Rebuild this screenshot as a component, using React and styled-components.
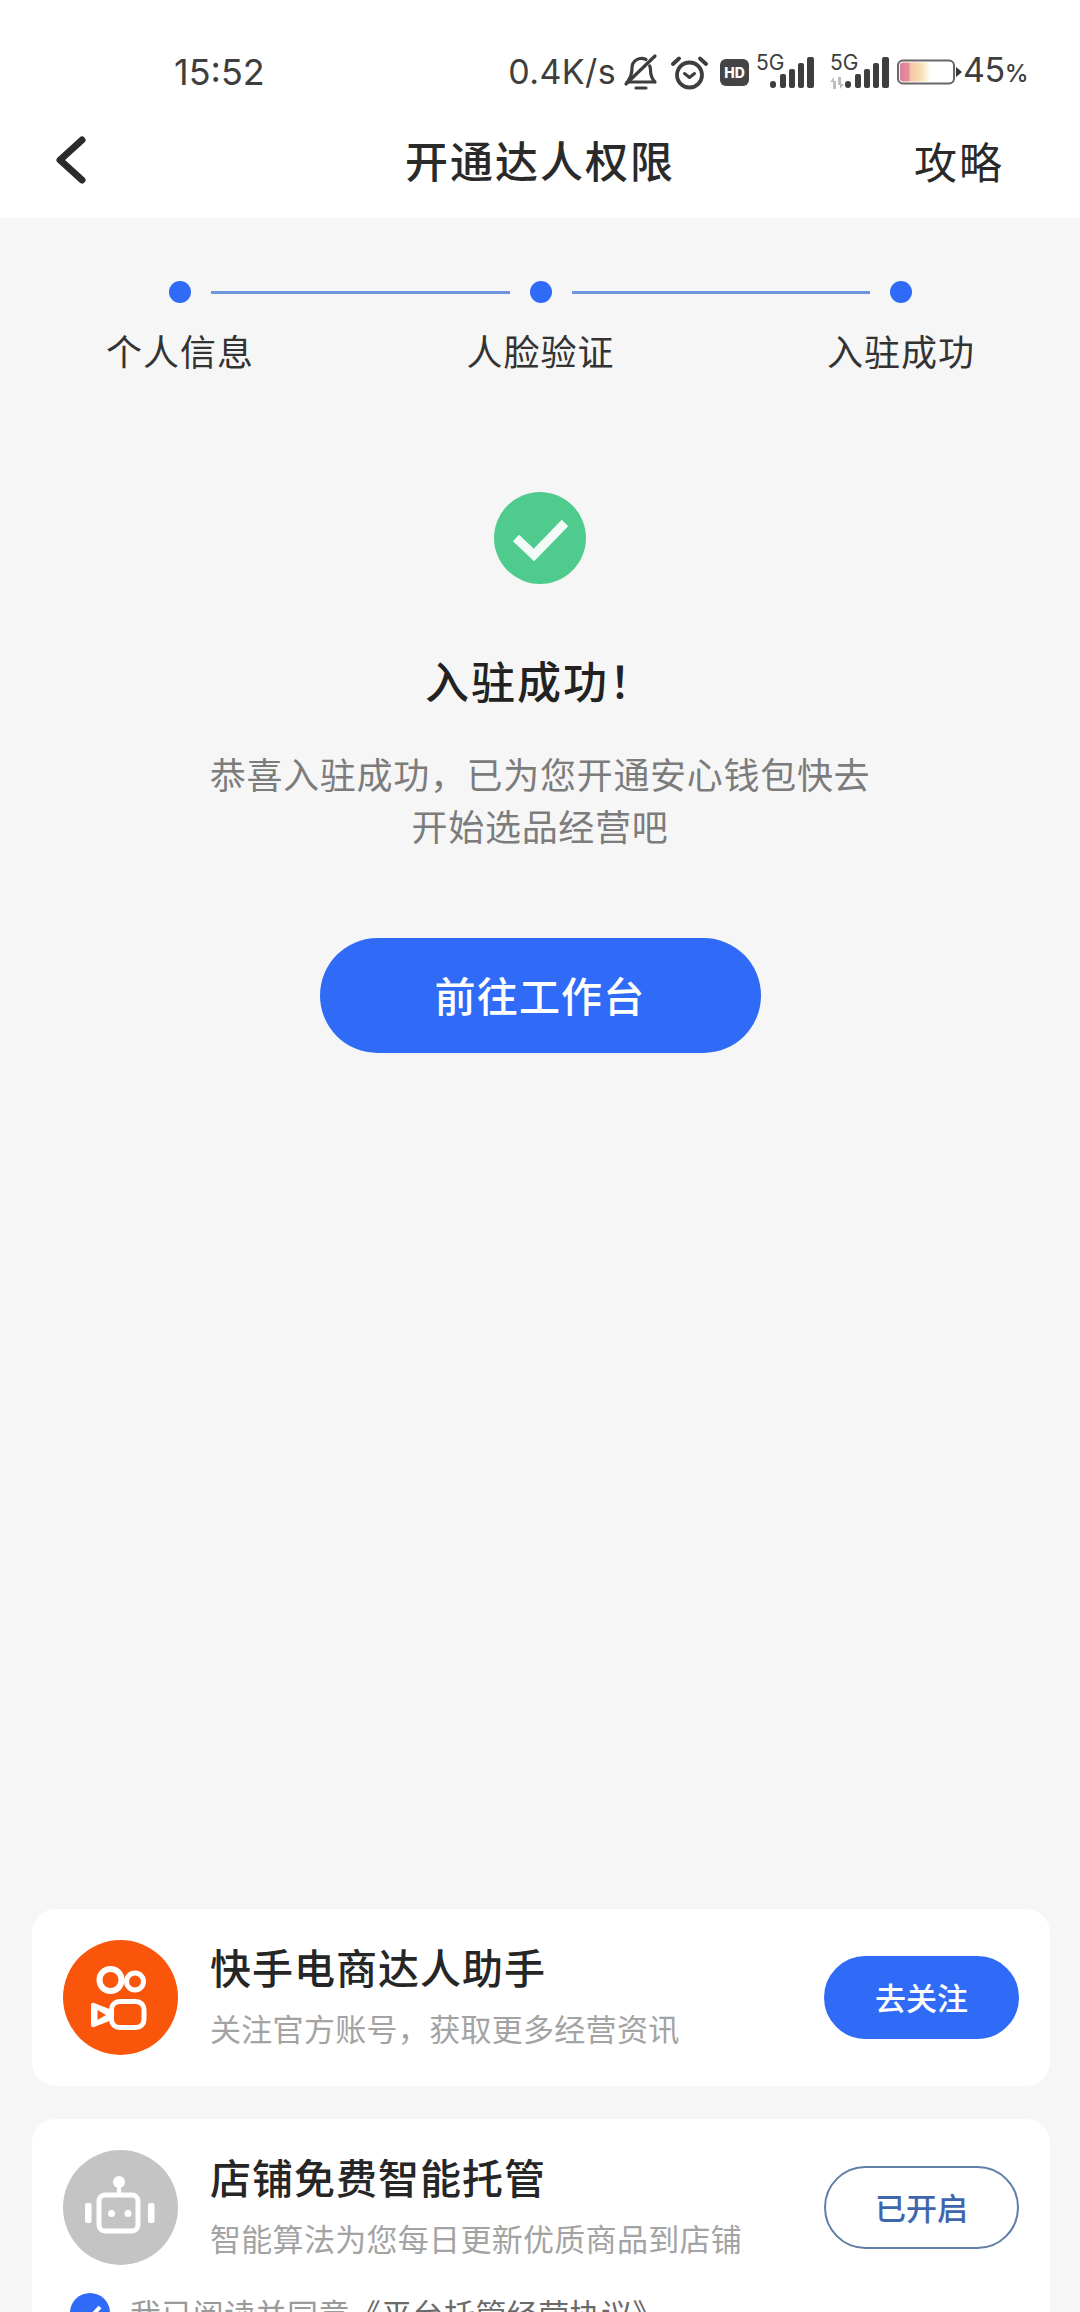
import React from 'react'
import styled, { createGlobalStyle } from 'styled-components'

const blue = '#2f6bf6'
const cjk = '"Noto Sans CJK SC", "Noto Sans", sans-serif'

// full-width punctuation, kept as escapes so an editor can't swap it for ascii
const COMMA = '\uFF0C'
const BANG = '\uFF01'

const GlobalStyle = createGlobalStyle`
  html, body {
    margin: 0;
    padding: 0;
    background: #f6f6f6;
  }
  * {
    box-sizing: border-box;
  }
`

const Page = styled.div`
  width: 1080px;
  height: 2312px;
  overflow: hidden;
  background: #f6f6f6;
  font-family: ${cjk};
  color: #222;
`

const Top = styled.header`
  background: #fff;
  height: 218px;
`

const StatusBar = styled.div`
  height: 110px;
  padding: 52px 52px 0 174px;
  display: flex;
  justify-content: space-between;
  align-items: flex-start;
  color: #3e3e3e;
  font-family: Inter, Roboto, sans-serif;
`

const Time = styled.span`
  font-size: 36px;
  line-height: 40px;
  width: 92px;
`

const StatusIcons = styled.div`
  display: flex;
  align-items: center;
  height: 40px;
`

const Speed = styled.span`
  font-size: 34px;
  line-height: 40px;
  letter-spacing: 0.4px;
  margin-right: 8px;
`

const IconSlot = styled.svg`
  display: block;
  flex: none;
  margin-left: ${(p) => p.$left || 0}px;
`

const HdBadge = styled.span`
  flex: none;
  width: 29px;
  height: 27px;
  margin-left: 12px;
  border-radius: 6px;
  background: #444;
  color: #fff;
  font-size: 14px;
  font-weight: 800;
  line-height: 27px;
  text-align: center;
`

const Signal = styled.div`
  position: relative;
  flex: none;
  width: ${(p) => p.$w}px;
  height: 40px;
  margin-left: ${(p) => p.$left}px;
`

const SignalLabel = styled.span`
  position: absolute;
  left: 0;
  top: -1px;
  font-size: 21px;
  line-height: 24px;
`

const SignalArrows = styled.svg`
  position: absolute;
  left: 0;
  bottom: 3px;
`

const SignalBars = styled.svg`
  position: absolute;
  right: 0;
  top: 5px;
`

const Percent = styled.span`
  font-size: 34px;
  line-height: 40px;
  letter-spacing: -0.5px;
`

const PercentSign = styled.small`
  font-size: 24px;
  font-weight: 500;
`

const NavBar = styled.nav`
  height: 108px;
  padding: 0 55px 8px;
  display: grid;
  grid-template-columns: 1fr auto 1fr;
  align-items: center;
`

const NavTitle = styled.h1`
  margin: 0 0 2px;
  font-size: 43px;
  font-weight: 500;
  letter-spacing: 2px;
  line-height: 60px;
  color: #2a2a2a;
`

const NavLink = styled.span`
  justify-self: end;
  margin-right: 21px;
  font-size: 43px;
  line-height: 60px;
  letter-spacing: 2px;
  color: #2a2a2a;
`

const Main = styled.main`
  display: flex;
  flex-direction: column;
  align-items: center;
  padding-top: 63px;
`

const Track = styled.div`
  width: 100%;
  padding: 0 168px 0 169px;
  display: flex;
  align-items: center;
`

const Dot = styled.span`
  flex: none;
  width: 22px;
  height: 22px;
  border-radius: 50%;
  background: ${blue};
`

const TrackLine = styled.span`
  flex: 1;
  height: 3px;
  margin: 0 20px;
  background: #6f95de;
`

const Labels = styled.div`
  width: 100%;
  margin-top: 21px;
  padding: 0 105px 0 106px;
  display: flex;
  justify-content: space-between;
`

const Label = styled.span`
  width: 148px;
  text-align: center;
  font-size: 36px;
  line-height: 52px;
  letter-spacing: 1px;
  color: #333;
  white-space: nowrap;
`

const SuccessIcon = styled.svg`
  display: block;
  margin-top: 116px;
`

const Heading = styled.h2`
  margin: 66px 0 0;
  font-size: 44px;
  font-weight: 500;
  line-height: 60px;
  letter-spacing: 2px;
  color: #222;
`

const Description = styled.p`
  margin: 37px 0 0;
  width: 700px;
  text-align: center;
  font-size: 36px;
  line-height: 52px;
  letter-spacing: 0.7px;
  color: #7c7c7c;
`

const PrimaryButton = styled.button`
  display: block;
  margin-top: 87px;
  width: 441px;
  height: 115px;
  padding: 0 0 4px;
  border: none;
  border-radius: 58px;
  background: ${blue};
  color: #fff;
  font-family: inherit;
  font-size: 41px;
  font-weight: 500;
  letter-spacing: 1.2px;
`

const Cards = styled.section`
  margin: 856px 30px 0 32px;
  display: flex;
  flex-direction: column;
  gap: 33px;
`

const Card = styled.article`
  background: #fff;
  border-radius: 24px;
  padding: 31px;
`

const CardRow = styled.div`
  display: flex;
  align-items: center;
`

const Avatar = styled.div`
  flex: none;
  width: 115px;
  height: 115px;
  border-radius: 50%;
  background: ${(p) => p.$color};
`

const AvatarArt = styled.svg`
  display: block;
  width: 115px;
  height: 115px;
`

const CardText = styled.div`
  flex: 1;
  min-width: 0;
  margin-left: 32px;
  padding-bottom: 7px;
`

const CardTitle = styled.div`
  font-size: 41px;
  font-weight: 500;
  line-height: 52px;
  letter-spacing: 1px;
  color: #262626;
`

const CardSub = styled.div`
  margin-top: 16px;
  font-size: 31px;
  line-height: 40px;
  letter-spacing: 0.3px;
  color: #a3a3a3;
  white-space: nowrap;
`

const CardButton = styled.button`
  flex: none;
  width: 195px;
  height: 83px;
  border-radius: 42px;
  border: 2px solid ${(p) => (p.$outline ? '#5f7fa8' : blue)};
  background: ${(p) => (p.$outline ? '#fff' : blue)};
  color: ${(p) => (p.$outline ? '#3f66ad' : '#fff')};
  font-family: inherit;
  font-size: 31px;
  font-weight: 500;
  padding: 0 0 2px;
`

const Agreement = styled.div`
  margin-top: 28px;
  padding-left: 7px;
  display: flex;
  align-items: flex-start;
  gap: 20px;
  font-size: 31px;
  line-height: 40px;
  letter-spacing: 0.4px;
  color: #9a9a9a;
  white-space: nowrap;
`

const AgreementLink = styled.span`
  color: #6a6a6a;
`

const CheckDot = styled.svg`
  display: block;
  flex: none;
`

const Bell = () => (
  <IconSlot width="34" height="36" viewBox="0 0 34 36" fill="none" stroke="#3e3e3e" strokeWidth="3.200" strokeLinecap="round" strokeLinejoin="round">
    <path d="M3 28h28M31 28c-3-3-4.500-6-4.500-12 0-1.500-.3-3-.8-4M22 5.500A9.500 9.500 0 0 0 8 14c0 5-1 9-4 13" />
    <path d="M2 30 31 2" />
    <path d="M12 34h10" />
  </IconSlot>
)

const Alarm = () => (
  <IconSlot $left={13} width="37" height="35" viewBox="0 0 37 35" fill="none" stroke="#3e3e3e" strokeWidth="3.800" strokeLinecap="round" strokeLinejoin="round">
    <circle cx="18.500" cy="20" r="12.500" />
    <path d="M13.500 18.500l5 4 5-4" strokeWidth="3" />
    <path d="M2 9 8 3.500M35 9l-6-5.500" />
  </IconSlot>
)

const Bars = () => (
  <SignalBars width="44" height="31" viewBox="0 0 44 31" fill="#3e3e3e">
    <rect x="0" y="24" width="6" height="7" rx="3" />
    <rect x="10" y="17" width="6" height="14" rx="2" />
    <rect x="19" y="12" width="6" height="19" rx="2" />
    <rect x="28" y="6" width="6" height="25" rx="2" />
    <rect x="37" y="0" width="7" height="31" rx="2" />
  </SignalBars>
)

const Arrows = () => (
  <SignalArrows width="14" height="12" viewBox="0 0 14 12" fill="#bdbdbd">
    <path d="M4 0v4h2v8H3V5H0zM10 12V8H8V0h3v7h3z" />
  </SignalArrows>
)

const Battery = () => (
  <IconSlot $left={8} width="66" height="26" viewBox="0 0 66 26">
    <defs>
      <linearGradient id="batteryFill" x1="0" x2="1" y1="0" y2="0">
        <stop offset="0" stopColor="#dc7f98" />
        <stop offset="0.3" stopColor="#e98f9e" />
        <stop offset="0.32" stopColor="#f7c4ae" />
        <stop offset="0.62" stopColor="#f9d9a8" />
        <stop offset="1" stopColor="#fff" />
      </linearGradient>
    </defs>
    <rect x="3" y="3.500" width="31" height="19" rx="3" fill="url(#batteryFill)" />
    <rect x="1" y="1.500" width="56" height="23" rx="5" fill="none" stroke="#666" strokeWidth="2" />
    <path d="M59 8l6 5-6 5z" fill="#333" />
  </IconSlot>
)

const StatusIconsRow = () => (
  <StatusIcons>
    <Speed>0.4K/s</Speed>
    <Bell />
    <Alarm />
    <HdBadge>HD</HdBadge>
    <Signal $w={58} $left={7}>
      <SignalLabel>5G</SignalLabel>
      <Bars />
    </Signal>
    <Signal $w={59} $left={16}>
      <SignalLabel>5G</SignalLabel>
      <Arrows />
      <Bars />
    </Signal>
    <Battery />
    <Percent>
      45<PercentSign>%</PercentSign>
    </Percent>
  </StatusIcons>
)

const BackArrow = () => (
  <svg width="32" height="48" viewBox="0 0 32 48" fill="none" stroke="#2b2b2b" strokeWidth="7" strokeLinecap="round" strokeLinejoin="round">
    <path d="M27 4 5 24l22 20" />
  </svg>
)

const KuaishouLogo = () => (
  <AvatarArt viewBox="0 0 115 115" fill="none" stroke="#fff" strokeLinejoin="round">
    <circle cx="47.500" cy="40" r="11" strokeWidth="6" />
    <circle cx="72" cy="41.500" r="8.500" strokeWidth="5" />
    <rect x="48.500" y="61.500" width="32.500" height="26" rx="8" strokeWidth="5" />
    <path
      d="M31 63 Q28 62 28 65V84Q28 88 31 87L49 80V70Z M34.500 70v10l8.500-5z"
      fill="#fff"
      fillRule="evenodd"
      stroke="none"
    />
  </AvatarArt>
)

const RobotLogo = () => (
  <AvatarArt viewBox="0 0 115 115" fill="#fff">
    <circle cx="56" cy="32" r="6" />
    <rect x="54" y="36" width="4" height="9" />
    <rect x="36" y="45" width="39" height="36" rx="6" fill="#c4c4c4" stroke="#fff" strokeWidth="5" />
    <circle cx="48.500" cy="63.500" r="3.500" />
    <circle cx="65" cy="63.500" r="3.500" />
    <rect x="22" y="53" width="6.500" height="20" rx="2" />
    <rect x="85" y="53" width="6.500" height="20" rx="2" />
  </AvatarArt>
)

export default function App() {
  return (
    <Page>
      <GlobalStyle />
      <Top>
        <StatusBar>
          <Time>15:52</Time>
          <StatusIconsRow />
        </StatusBar>
        <NavBar>
          <BackArrow />
          <NavTitle>开通达人权限</NavTitle>
          <NavLink>攻略</NavLink>
        </NavBar>
      </Top>

      <Main>
        <Track>
          <Dot />
          <TrackLine />
          <Dot />
          <TrackLine />
          <Dot />
        </Track>
        <Labels>
          <Label>个人信息</Label>
          <Label>人脸验证</Label>
          <Label>入驻成功</Label>
        </Labels>

        <SuccessIcon width="92" height="92" viewBox="0 0 92 92">
          <circle cx="46" cy="46" r="46" fill="#4ecb8d" />
          <path d="M22 46l18 17 31-32" fill="none" stroke="#f2fbf6" strokeWidth="9" />
        </SuccessIcon>
        <Heading>入驻成功{BANG}</Heading>
        <Description>
          恭喜入驻成功{COMMA}已为您开通安心钱包快去
          <br />
          开始选品经营吧
        </Description>
        <PrimaryButton>前往工作台</PrimaryButton>
      </Main>

      <Cards>
        <Card>
          <CardRow>
            <Avatar $color="#f9560c">
              <KuaishouLogo />
            </Avatar>
            <CardText>
              <CardTitle>快手电商达人助手</CardTitle>
              <CardSub>关注官方账号{COMMA}获取更多经营资讯</CardSub>
            </CardText>
            <CardButton>去关注</CardButton>
          </CardRow>
        </Card>
        <Card>
          <CardRow>
            <Avatar $color="#c4c4c4">
              <RobotLogo />
            </Avatar>
            <CardText>
              <CardTitle>店铺免费智能托管</CardTitle>
              <CardSub>智能算法为您每日更新优质商品到店铺</CardSub>
            </CardText>
            <CardButton $outline>已开启</CardButton>
          </CardRow>
          <Agreement>
            <CheckDot width="40" height="40" viewBox="0 0 40 40">
              <circle cx="20" cy="20" r="20" fill={blue} />
              <path d="M11 20l7 7 12-13" fill="none" stroke="#fff" strokeWidth="4" />
            </CheckDot>
            <span>
              我已阅读并同意<AgreementLink>《平台托管经营协议》</AgreementLink>
            </span>
          </Agreement>
        </Card>
      </Cards>
    </Page>
  )
}
